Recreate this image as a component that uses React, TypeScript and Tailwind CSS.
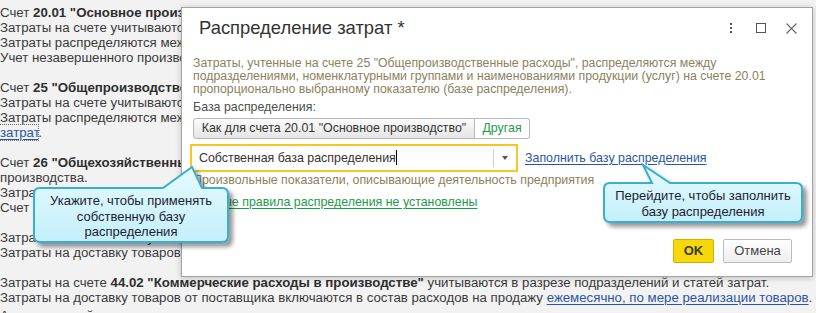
import React from "react";

const Link = ({ children, className = "" }: { children: React.ReactNode; className?: string }) => (
  <span className={"text-[#2a55a3] underline underline-offset-2 " + className}>{children}</span>
);

function Background() {
  return (
    <div className="pt-[5px] text-[13.25px] leading-[15px] text-[#3a3a3a] whitespace-nowrap">
      <div>
        Счет <b className="text-[#2e2e2e]">20.01 "Основное производство"</b> учитываются прямые затраты основного производства.
      </div>
      <div>Затраты на счете учитываются в разрезе подразделений, номенклатурных групп и статей затрат.</div>
      <div>Затраты распределяются между номенклатурными группами и продукцией по плановым ценам.</div>
      <div>Учет незавершенного производства ведется по плановой себестоимости продукции.</div>
      <div className="h-[15px]" />
      <div>
        Счет <b className="text-[#2e2e2e]">25 "Общепроизводственные расходы"</b> учитываются косвенные расходы.
      </div>
      <div>Затраты на счете учитываются в разрезе подразделений и статей затрат.</div>
      <div>Затраты распределяются между подразделениями в соответствии с методами распределения косвенных</div>
      <div>
        <span className="text-[#2a55a3] underline underline-offset-2 outline outline-1 outline-dotted outline-[#666]">затрат</span>.
      </div>
      <div className="h-[15px]" />
      <div>
        Счет <b className="text-[#2e2e2e]">26 "Общехозяйственные расходы"</b> учитываются в себестоимости продукции основного
      </div>
      <div>производства.</div>
      <div>Затраты на счете учитываются в разрезе подразделений и статей затрат.</div>
      <div>
        Счет <Link>26 закрывается ежемесячно</Link>.
      </div>
      <div className="h-[15px]" />
      <div>Затраты на счете 44.01 учитываются в разрезе подразделений.</div>
      <div>Затраты на доставку товаров от поставщика включаются в себестоимость.</div>
      <div className="h-[15px]" />
      <div>
        Затраты на счете <b className="text-[#2e2e2e]">44.02 "Коммерческие расходы в производстве"</b> учитываются в разрезе подразделений и статей затрат.
      </div>
      <div>
        Затраты на доставку товаров от поставщика включаются в состав расходов на продажу{" "}
        <Link>ежемесячно, по мере реализации товаров</Link>.
      </div>
      <div className="mt-[3px]">Аналитический учет затрат</div>
    </div>
  );
}

function Dialog() {
  return (
    <div className="absolute left-[181px] top-[7px] w-[632px] h-[270px] bg-white border border-[#a3a3a3] shadow-[0_1px_6px_rgba(0,0,0,0.22)] flex flex-col">
      {/* header */}
      <div className="flex items-start justify-between pl-[17px] pr-[11px] pt-[8px]">
        <div className="text-[18.4px] leading-[24px] text-[#333]">Распределение затрат *</div>
        <div className="flex items-center h-[24px] gap-[10px]">
          <div className="w-[20px] h-[20px] flex flex-col items-center justify-center gap-[2px]">
            <div className="w-[2px] h-[2px] bg-[#555]" />
            <div className="w-[2px] h-[2px] bg-[#555]" />
            <div className="w-[2px] h-[2px] bg-[#555]" />
          </div>
          <div className="w-[20px] h-[20px] flex items-center justify-center">
            <div className="w-[10px] h-[10px] border border-[#555]" />
          </div>
          <div className="w-[20px] h-[20px] flex items-center justify-center">
            <svg width="11" height="11" viewBox="0 0 11 11">
              <path d="M0.5 0.5 L10.5 10.5 M10.5 0.5 L0.5 10.5" stroke="#666" strokeWidth="1.1" fill="none" />
            </svg>
          </div>
        </div>
      </div>

      {/* body */}
      <div className="px-[11px] flex flex-col flex-1 text-[12.4px]">
        <div className="mt-[17px] text-[12.3px] leading-[13px] text-[#8c815d] whitespace-nowrap">
          <div>Затраты, учтенные на счете 25 "Общепроизводственные расходы", распределяются между</div>
          <div>подразделениями, номенклатурными группами и наименованиями продукции (услуг) на счете 20.01</div>
          <div>пропорционально выбранному показателю (базе распределения).</div>
        </div>
        <div className="mt-[4px] leading-[15px] text-[#4d4d4d]">База распределения:</div>

        <div className="mt-[3px] flex h-[21px]">
          <div className="w-[282px] flex items-center justify-center border border-[#b8b8b8] rounded-l-[3px] bg-gradient-to-b from-[#fbfbfb] to-[#e5e5e5] text-[#333]">
            Как для счета 20.01 "Основное производство"
          </div>
          <div className="w-[55px] flex items-center justify-center border border-l-0 border-[#b8b8b8] rounded-r-[3px] bg-white text-[#1e9a4c]">
            Другая
          </div>
        </div>

        <div className="mt-[5px] flex items-center">
          <div className="ml-[-3px] w-[328px] h-[28px] border-2 border-[#f6c623] flex items-center">
            <div className="pl-[7px] flex items-center flex-1 text-[#333]">
              Собственная база распределения
              <div className="w-px h-[15px] bg-black" />
            </div>
            <div className="w-px h-[18px] bg-[#cfcfcf]" />
            <div className="w-[22px] flex items-center justify-center">
              <div className="w-0 h-0 border-l-[3.5px] border-r-[3.5px] border-t-[4px] border-l-transparent border-r-transparent border-t-[#555]" />
            </div>
          </div>
          <div className="ml-[7px] text-[#2a55a3] underline underline-offset-2">Заполнить базу распределения</div>
        </div>

        <div className="mt-[1px] leading-[15px] text-[#8c815d]">
          Произвольные показатели, описывающие деятельность предприятия
        </div>
        <div className="mt-[7px] leading-[15px] text-[#1e9a4c] underline underline-offset-2">
          Особые правила распределения не установлены
        </div>

        <div className="mt-auto mb-[13px] flex justify-end gap-[9px] pr-[9px]">
          <div className="w-[41px] h-[24px] flex items-center justify-center bg-[#f7d708] border border-[#cfb200] rounded-[2px] text-[13px] font-bold text-[#3a3a3a]">
            OK
          </div>
          <div className="w-[69px] h-[24px] flex items-center justify-center bg-gradient-to-b from-white to-[#eeeeee] border border-[#bcbcbc] rounded-[2px] text-[13px] text-[#444]">
            Отмена
          </div>
        </div>
      </div>
    </div>
  );
}

function Callout({
  left, top, w, h, path, box, lines, id, textPt,
}: {
  left: number; top: number; w: number; h: number; path: string;
  box: { x: number; y: number; w: number; h: number }; lines: string[]; id: string; textPt: number;
}) {
  return (
    <div className="absolute" style={{ left, top, width: w, height: h }}>
      <svg width={w} height={h} className="absolute left-0 top-0 overflow-visible">
        <defs>
          <linearGradient id={id + "g"} x1="0" y1="0" x2="0" y2="1">
            <stop offset="0" stopColor="#e6fbff" />
            <stop offset="1" stopColor="#c4effa" />
          </linearGradient>
          <filter id={id + "f"} x="-10%" y="-10%" width="130%" height="140%">
            <feDropShadow dx="4" dy="4" stdDeviation="2" floodColor="#000" floodOpacity="0.4" />
          </filter>
        </defs>
        <path d={path} fill={`url(#${id}g)`} stroke="#39afd0" strokeWidth="2" filter={`url(#${id}f)`} />
      </svg>
      <div
        className="absolute flex flex-col items-center text-[13px] leading-[15.5px] text-[#1d2232] whitespace-nowrap"
        style={{ left: box.x, top: box.y, width: box.w, height: box.h, paddingTop: textPt }}
      >
        {lines.map((l) => (
          <div key={l}>{l}</div>
        ))}
      </div>
    </div>
  );
}

function rr(x1: number, y1: number, x2: number, y2: number, r: number, pa: number, tipx: number, tipy: number, pb: number) {
  return `M ${x1 + r} ${y1} L ${pa} ${y1} L ${tipx} ${tipy} L ${pb} ${y1} L ${x2 - r} ${y1} Q ${x2} ${y1} ${x2} ${y1 + r} L ${x2} ${y2 - r} Q ${x2} ${y2} ${x2 - r} ${y2} L ${x1 + r} ${y2} Q ${x1} ${y2} ${x1} ${y2 - r} L ${x1} ${y1 + r} Q ${x1} ${y1} ${x1 + r} ${y1} Z`;
}

export default function App() {
  return (
    <div className="relative w-[816px] h-[313px] overflow-hidden bg-[#f2f2f2] font-['Liberation_Sans',Arial,sans-serif]">
      <Background />
      <Dialog />
      <Callout
        id="c1"
        left={28}
        top={160}
        w={214}
        h={90}
        path={rr(6, 28, 200, 82, 6, 135, 164, 7, 174)}
        box={{ x: 6, y: 28, w: 194, h: 54 }}
        lines={["Укажите, чтобы применять", "собственную базу", "распределения"]}
        textPt={5}
      />
      <Callout
        id="c2"
        left={598}
        top={160}
        w={216}
        h={70}
        path={rr(6, 23, 204, 62, 6, 54, 45, 5, 72)}
        box={{ x: 6, y: 23, w: 198, h: 39 }}
        lines={["Перейдите, чтобы заполнить", "базу распределения"]}
        textPt={5}
      />
    </div>
  );
}
